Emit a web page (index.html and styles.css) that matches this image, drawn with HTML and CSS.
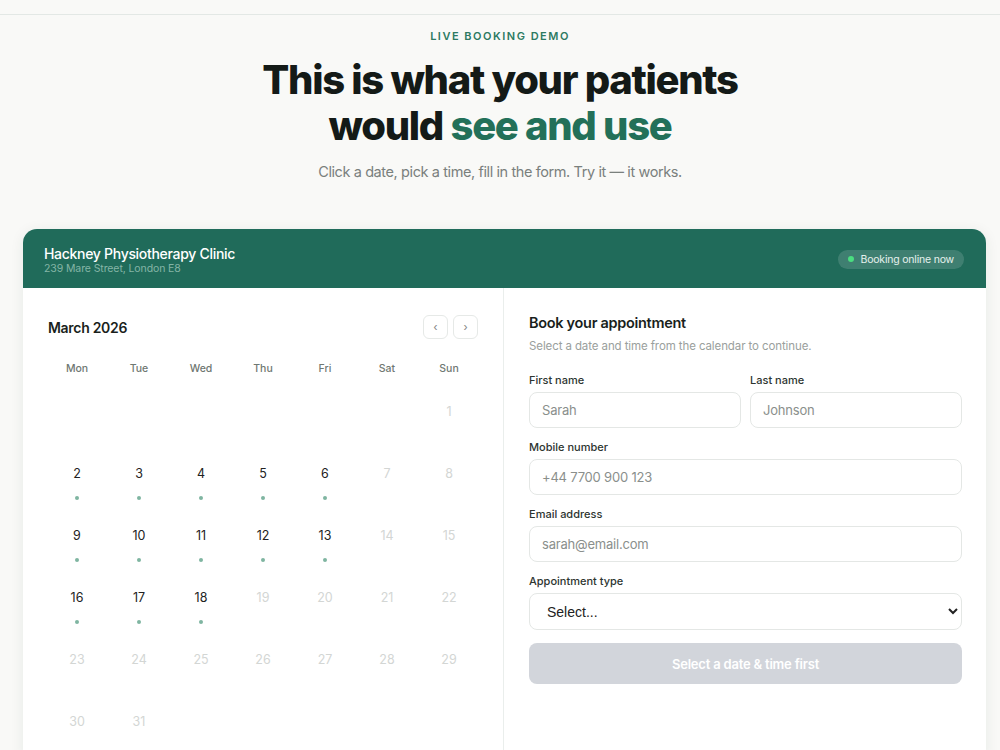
FILE: index.html
```html
<!DOCTYPE html>
<html lang="en">
<head>
  <meta charset="UTF-8">
  <meta name="viewport" content="width=device-width, initial-scale=1.0">
  <title>Live booking demo</title>
  <link rel="stylesheet" href="styles.css">
</head>
<body>
  <div class="topbar"></div>

  <section class="intro">
    <p class="eyebrow">LIVE BOOKING DEMO</p>
    <h1>This is what your patients<br>would <span class="accent">see and use</span></h1>
    <p class="lead">Click a date, pick a time, fill in the form. Try it — it works.</p>
  </section>

  <div class="widget">
    <!-- Clinic header -->
    <div class="widget-head">
      <div>
        <div class="clinic-name">Hackney Physiotherapy Clinic</div>
        <div class="clinic-address">239 Mare Street, London E8</div>
      </div>
      <div class="status"><span class="status-dot"></span>Booking online now</div>
    </div>

    <div class="widget-body">
      <!-- Calendar -->
      <div class="calendar">
        <div class="cal-top">
          <h3>March 2026</h3>
          <div class="cal-nav">
            <button>&lsaquo;</button>
            <button>&rsaquo;</button>
          </div>
        </div>
        <div class="weekdays">
          <div>Mon</div><div>Tue</div><div>Wed</div><div>Thu</div><div>Fri</div><div>Sat</div><div>Sun</div>
        </div>
        <div class="cal-grid" id="calGrid"></div>
      </div>

      <!-- Form -->
      <div class="booking">
        <h3>Book your appointment</h3>
        <p class="hint">Select a date and time from the calendar to continue.</p>

        <div class="row">
          <div class="field">
            <label>First name</label>
            <input type="text" placeholder="Sarah">
          </div>
          <div class="field">
            <label>Last name</label>
            <input type="text" placeholder="Johnson">
          </div>
        </div>
        <div class="field">
          <label>Mobile number</label>
          <input type="text" placeholder="+44 7700 900 123">
        </div>
        <div class="field">
          <label>Email address</label>
          <input type="text" placeholder="sarah@email.com">
        </div>
        <div class="field">
          <label>Appointment type</label>
          <select>
            <option>Select...</option>
            <option>Initial assessment</option>
            <option>Follow-up</option>
          </select>
        </div>
        <button class="submit" disabled>Select a date &amp; time first</button>
      </div>
    </div>
  </div>

  <script>
    // Dias disponíveis em março de 2026
    const available = [2, 3, 4, 5, 6, 9, 10, 11, 12, 13, 16, 17, 18];
    const grid = document.getElementById('calGrid');

    // 1 de março de 2026 é domingo
    for (let i = 0; i < 6; i++) {
      grid.appendChild(document.createElement('div'));
    }

    for (let d = 1; d <= 31; d++) {
      const cell = document.createElement('div');
      cell.className = available.includes(d) ? 'day open' : 'day';
      cell.innerHTML = `<span>${d}</span>`;
      grid.appendChild(cell);
    }
  </script>
</body>
</html>
```

FILE: styles.css
```css
body {
  margin: 0;
  background: #f9f9f7;
  font-family: Inter, "Noto Sans", sans-serif;
  color: #1a1f1c;
}
.topbar {
  height: 14px;
  border-bottom: 1px solid #e3e8e5;
}
.intro {
  text-align: center;
  padding-top: 14px;
}
.eyebrow {
  margin: 0;
  font-size: 11px;
  font-weight: 600;
  letter-spacing: 1.5px;
  color: #2d7a62;
}
h1 {
  margin: 14px 0 0;
  font-size: 40px;
  line-height: 46px;
  font-weight: 800;
  letter-spacing: -1.3px;
  color: #141a17;
}
.accent {
  color: #237059;
}
.lead {
  margin: 14px 0 0;
  font-size: 14.5px;
  letter-spacing: -0.4px;
  color: #7a807d;
}
.widget {
  margin: 49px 14px 0 23px;
  background: #fff;
  border-radius: 14px 14px 0 0;
  overflow: hidden;
  box-shadow: 0 2px 14px rgba(20, 60, 45, 0.08);
}
.widget-head {
  height: 59px;
  box-sizing: border-box;
  background: #206b5a;
  display: flex;
  align-items: center;
  justify-content: space-between;
  padding: 3px 22px 0 21px;
}
.clinic-name {
  color: #fff;
  font-size: 14px;
  line-height: 16px;
  font-weight: 500;
  letter-spacing: -0.3px;
}
.clinic-address {
  color: #84b5a6;
  font-size: 10.5px;
  line-height: 13px;
  letter-spacing: -0.1px;
}
.status {
  display: flex;
  align-items: center;
  gap: 6px;
  background: rgba(255, 255, 255, 0.14);
  color: #e6f1ed;
  font-size: 10.5px;
  letter-spacing: -0.2px;
  padding: 3px 10px;
  border-radius: 20px;
  margin-top: -2px;
}
.status-dot {
  width: 6px;
  height: 6px;
  border-radius: 50%;
  background: #4ade80;
}
.widget-body {
  display: flex;
  height: 470px;
}
.calendar {
  width: 481px;
  box-sizing: border-box;
  border-right: 1px solid #eaeeec;
  padding: 27px 25px 0 23px;
}
.cal-top {
  display: flex;
  align-items: center;
  justify-content: space-between;
  padding-left: 2px;
}
.cal-top h3 {
  margin: 0;
  font-size: 14px;
  font-weight: 600;
  letter-spacing: -0.3px;
}
.cal-nav {
  display: flex;
  gap: 5px;
}
.cal-nav button {
  width: 25px;
  height: 24px;
  border: 1px solid #e6e9e7;
  border-radius: 6px;
  background: #fff;
  color: #888;
  font-size: 12px;
  padding: 0;
}
.weekdays {
  display: grid;
  grid-template-columns: repeat(7, 62px);
  margin-top: 23px;
  text-align: center;
  font-size: 10.5px;
  line-height: 14px;
  font-weight: 500;
  color: #6f7872;
}
.cal-grid {
  display: grid;
  grid-template-columns: repeat(7, 62px);
  grid-auto-rows: 62px;
  margin-top: 16px;
}
.day {
  text-align: center;
  font-size: 12.5px;
  color: #d3d6d4;
  padding-top: 12px;
  box-sizing: border-box;
}
.day span {
  display: block;
  line-height: 16px;
}
.day.open {
  color: #222;
}
.day.open::after {
  content: "";
  display: block;
  width: 4px;
  height: 4px;
  border-radius: 50%;
  background: #7fb5a1;
  margin: 14px auto 0;
}
.booking {
  flex: 1;
  padding: 26px 24px 0 25px;
}
.booking h3 {
  margin: 0;
  font-size: 14.5px;
  font-weight: 600;
  letter-spacing: -0.3px;
}
.hint {
  margin: 8px 0 0;
  font-size: 11.5px;
  letter-spacing: -0.1px;
  color: #9aa09d;
}
.row {
  display: flex;
  gap: 9px;
  margin-top: 20px;
}
.row .field {
  flex: 1;
  margin-top: 0;
}
.field {
  margin-top: 12px;
}
.field label {
  display: block;
  font-size: 11px;
  font-weight: 500;
  color: #2d3530;
  margin-bottom: 5px;
}
.field input,
.field select {
  width: 100%;
  box-sizing: border-box;
  height: 36px;
  border: 1px solid #e4e7e5;
  border-radius: 8px;
  padding: 0 12px;
  font-family: inherit;
  font-size: 13px;
  letter-spacing: -0.2px;
  background: #fff;
}
.field input::placeholder {
  color: #8a8f8c;
}
.field select {
  height: 37px;
  color: #222;
  font-family: "Liberation Sans", Arial, sans-serif;
  font-size: 14px;
  letter-spacing: 0;
  padding-left: 13px;
}
.submit {
  width: 100%;
  height: 41px;
  margin-top: 13px;
  border: none;
  border-radius: 8px;
  background: #d2d5db;
  color: #fff;
  font-family: inherit;
  font-size: 13px;
  font-weight: 600;
  letter-spacing: -0.2px;
}
```
